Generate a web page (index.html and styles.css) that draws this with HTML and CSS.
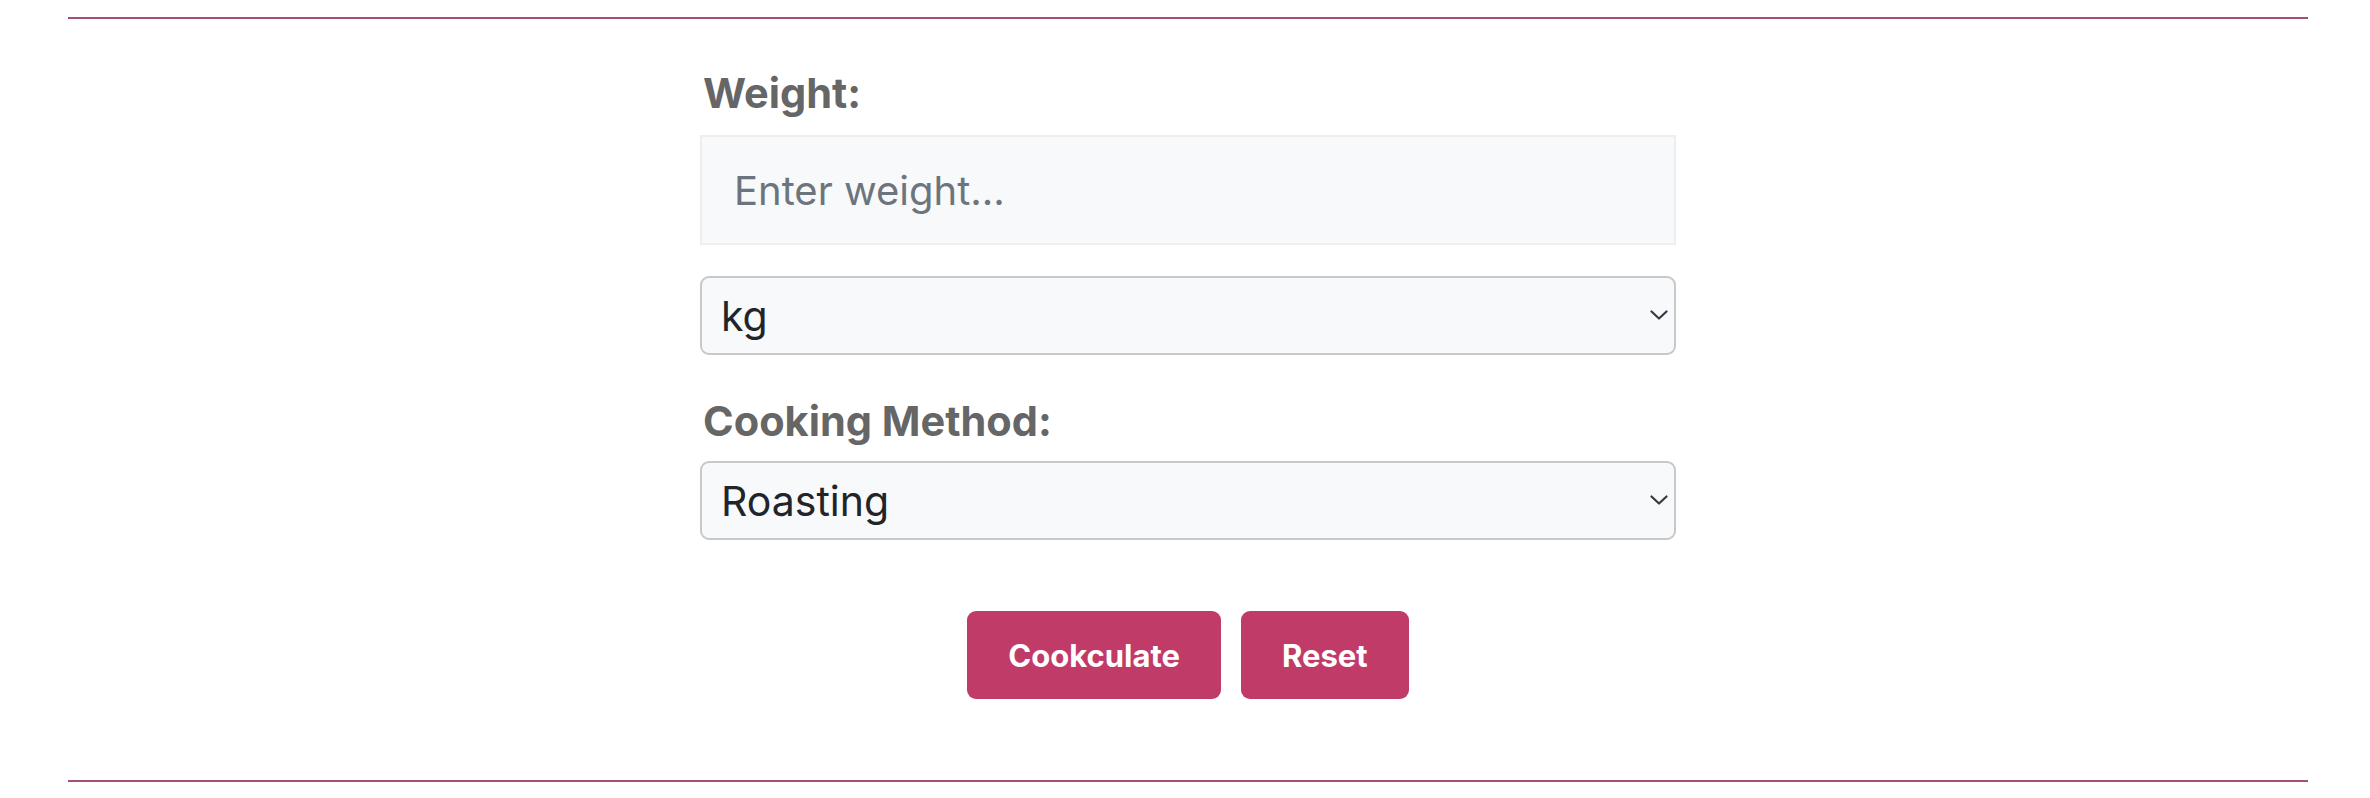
FILE: index.html
```html
<!DOCTYPE html>
<html lang="en">
<head>
<meta charset="utf-8">
<title>Cookculator</title>
<link rel="stylesheet" href="styles.css">
</head>
<body>
<div class="page">
  <form class="calc">
    <label class="label" for="weight">Weight:</label>
    <input class="field input" id="weight" type="text" placeholder="Enter weight...">
    <div class="select-wrap unit-wrap">
      <select class="field select" id="unit">
        <option>kg</option>
        <option>lb</option>
      </select>
      <svg class="chev" viewBox="0 0 18 10" aria-hidden="true"><path d="M1.5 1.5 L9 8.5 L16.5 1.5" fill="none" stroke="#343a40" stroke-width="2.2" stroke-linecap="round" stroke-linejoin="round"/></svg>
    </div>
    <label class="label method-label" for="method">Cooking Method:</label>
    <div class="select-wrap">
      <select class="field select" id="method">
        <option>Roasting</option>
        <option>Grilling</option>
      </select>
      <svg class="chev" viewBox="0 0 18 10" aria-hidden="true"><path d="M1.5 1.5 L9 8.5 L16.5 1.5" fill="none" stroke="#343a40" stroke-width="2.2" stroke-linecap="round" stroke-linejoin="round"/></svg>
    </div>
    <div class="actions">
      <button type="button" class="btn">Cookculate</button>
      <button type="button" class="btn">Reset</button>
    </div>
  </form>
</div>
</body>
</html>
```
FILE: styles.css
```css
html, body {
  margin: 0;
  padding: 0;
  background: #ffffff;
}
body {
  font-family: Inter, "Noto Sans", "Liberation Sans", sans-serif;
}
.page {
  margin: 17px 0 0 68px;
  width: 2240px;
  border-top: 2px solid #a64d79;
  border-bottom: 2px solid #a64d79;
  box-sizing: border-box;
  height: 765px;
  display: flex;
  justify-content: center;
}
.calc {
  width: 976px;
  display: flex;
  flex-direction: column;
  padding-top: 48px;
}
.label {
  font-size: 41.5px;
  font-weight: 700;
  color: #666666;
  line-height: 52px;
  margin-left: 3px;
  margin-bottom: 16px;
}
.field {
  box-sizing: border-box;
  width: 976px;
  font-family: inherit;
  background: #f8f9fa;
  margin: 0;
  outline: none;
}
.input {
  height: 110px;
  border: 2px solid #eceef0;
  border-radius: 0;
  padding: 0 32px;
  font-size: 40px;
  color: #212529;
}
.input::placeholder {
  color: #6c757d;
  opacity: 1;
}
.select-wrap {
  position: relative;
  width: 976px;
}
.unit-wrap {
  margin-top: 31px;
  margin-bottom: 40px;
}
.select {
  display: block;
  height: 79px;
  border: 2px solid #c8c8c8;
  border-radius: 9px;
  padding: 0 19px;
  font-size: 41px;
  color: #212529;
  appearance: none;
  -webkit-appearance: none;
}
.chev {
  position: absolute;
  right: 8px;
  top: 34px;
  width: 18px;
  height: 10px;
  pointer-events: none;
}
.method-label {
  margin-bottom: 14px;
}
.actions {
  display: flex;
  justify-content: center;
  gap: 20px;
  margin-top: 71px;
}
.btn {
  height: 88px;
  border: none;
  border-radius: 9px;
  background: #c13b68;
  color: #ffffff;
  font-family: inherit;
  font-size: 31px;
  font-weight: 700;
  padding: 0 41px;
}
```
